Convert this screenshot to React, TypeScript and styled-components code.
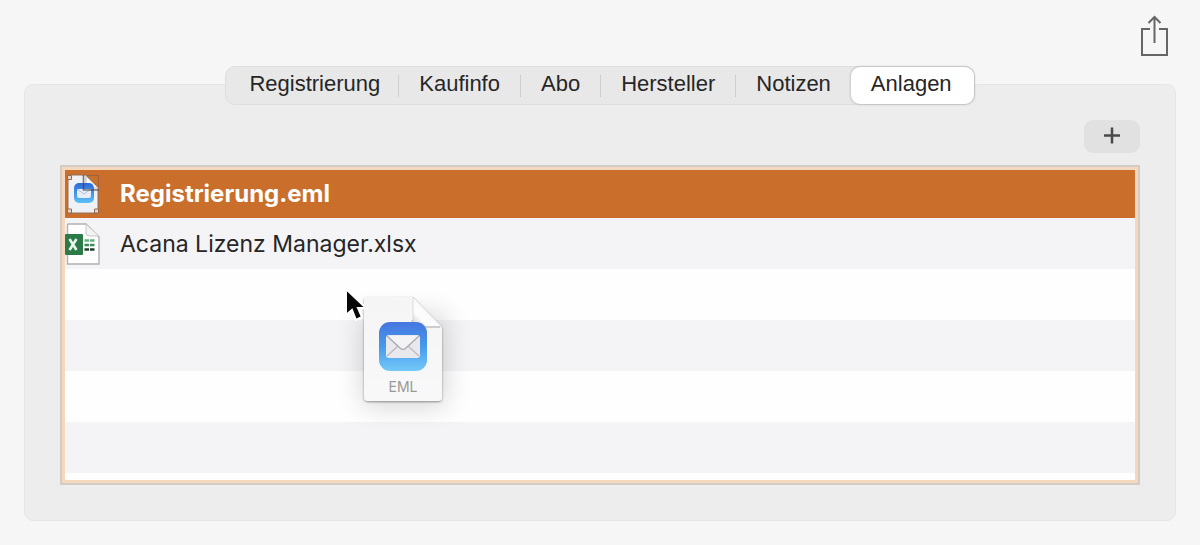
import React, { useState } from "react";
import styled, { createGlobalStyle } from "styled-components";

const GlobalStyle = createGlobalStyle`
  * { box-sizing: border-box; }
  body {
    margin: 0;
    background: #f6f6f6;
    color: #262626;
    font-family: "Liberation Sans", Arial, sans-serif;
  }
`;

const Page = styled.main`
  padding: 14px 24px 24px;
`;

const Toolbar = styled.header`
  display: flex;
  justify-content: flex-end;
  height: 52px;
  padding-right: 6px;
`;

const IconButton = styled.button`
  width: 32px;
  height: 44px;
  padding: 0;
  border: 0;
  background: none;
  svg { display: block; }
`;

const TabBar = styled.nav`
  display: flex;
  align-items: center;
  width: fit-content;
  height: 39px;
  margin: 0 auto -21px;
  position: relative;
  border: 1px solid #dedede;
  border-radius: 10px;
  background: #e8e8e8;
`;

const Tab = styled.button<{ $active: boolean }>`
  height: 37px;
  padding: 0 20px 4px;
  border: 0;
  border-radius: 9px;
  background: ${(p) => (p.$active ? "#ffffff" : "transparent")};
  box-shadow: ${(p) => (p.$active ? "0 0 2px 1px rgba(0, 0, 0, 0.14)" : "none")};
  color: #262626;
  font: 22px/32px "Liberation Sans", Arial, sans-serif;
  &:first-child { padding-left: 23px; padding-right: 18px; }
  &:last-child { padding-right: 22px; }
`;

const Divider = styled.span`
  width: 1px;
  height: 22px;
  background: #cecece;
`;

const Panel = styled.section`
  padding: 35px;
  border: 1px solid #e6e6e6;
  border-radius: 9px;
  background: #ededed;
`;

const Actions = styled.div`
  display: flex;
  justify-content: flex-end;
  margin-bottom: 12px;
`;

const AddButton = styled.button`
  display: grid;
  place-items: center;
  width: 56px;
  height: 33px;
  padding: 0 0 3px;
  border: 0;
  border-radius: 9px;
  background: #e1e1e1;
`;

const DropZone = styled.div`
  position: relative;
  border: 2px solid #d2cbc6;
`;

const FileList = styled.ul`
  margin: 0;
  padding: 0 0 7px;
  border: 3px solid #f5d9bf;
  background: #fffefe;
  list-style: none;
`;

const FileRow = styled.li<{ $selected?: boolean }>`
  display: flex;
  align-items: center;
  gap: 19px;
  height: ${(p) => (p.$selected ? 48 : 51)}px;
  background: ${(p) => (p.$selected ? "#c96f2b" : "transparent")};
  color: ${(p) => (p.$selected ? "#ffffff" : "#262626")};
  font: ${(p) => (p.$selected ? "700 24px" : "400 23px")}/28px Inter, sans-serif;
  &:nth-child(even) { background: #f4f4f6; }
  svg { flex: none; }
`;

const DragPreview = styled.div`
  position: absolute;
  left: 282px;
  top: 122px;
  pointer-events: none;
  svg { display: block; overflow: visible; }
`;

const ShareIcon = () => (
  <svg width="32" height="44" viewBox="0 0 32 44" fill="none" stroke="#666" strokeWidth="2">
    <path d="M12 15H4v26h25V15H21M16.500 29V3M10.500 9l6-6 6 6" />
  </svg>
);

const PlusIcon = () => (
  <svg width="18" height="18" viewBox="0 0 18 18" stroke="#4a4a4a" strokeWidth="2.500">
    <path d="M1 9.500h16M9 1.500v16" />
  </svg>
);

const EmlFileIcon = () => (
  <svg width="36" height="42" viewBox="0 0 36 42">
    <defs>
      <linearGradient id="smallMail" x1="0" y1="0" x2="0" y2="1">
        <stop offset="0" stopColor="#2c68d8" />
        <stop offset="1" stopColor="#5cc0f6" />
      </linearGradient>
    </defs>
    <path d="M3 2h18l12 13v25H3z" fill="#eef1f5" stroke="#94705c" />
    <path d="M21 3v12h12z" fill="#fff" stroke="#c3b6ae" />
    <path d="M22 2.500h11.500V14" fill="none" stroke="#a0623a" />
    <rect x="9" y="10" width="20" height="20" rx="5" fill="url(#smallMail)" />
    <rect x="12" y="16" width="14" height="9" rx="2" fill="#e6edf7" />
    <path d="m12 16 7 5 7-5" fill="none" stroke="#b5c0d1" />
    <path d="M18.500 2v15H34" fill="none" stroke="#4b4149" strokeOpacity=".7" strokeWidth="1.600" />
    <path d="M2.500 2.500h4v4h-4zM2.500 36h4v4h-4zM29.500 36h4v4h-4z" fill="#e6d3c6" stroke="#936a51" />
  </svg>
);

const XlsxFileIcon = () => (
  <svg width="36" height="44" viewBox="0 0 36 44">
    <path d="M3.500 2H21l13 13v27H2.500V3q0-1 1-1z" fill="#fff" stroke="#b0b1b3" strokeWidth="1.400" />
    <path d="M21 2v9q0 3 4 3h9z" fill="#f3f3f3" stroke="#c6c6c6" />
    <rect x="0" y="12" width="18" height="21" rx="1" fill="#2b7a47" />
    <path d="m4.500 17 7 11M11.500 17l-7 11" stroke="#e9f6ed" strokeWidth="2.600" />
    <path d="M19.500 18.500h4.500M25 18.500h4.500" stroke="#62b07e" strokeWidth="2.600" />
    <path d="M19.500 23h4.500M25 23h4.500" stroke="#418a5a" strokeWidth="2.600" />
    <path d="M19.500 27.500h4.500M25 27.500h4.500" stroke="#203e2c" strokeWidth="2.600" />
  </svg>
);

const DraggedFile = () => (
  <svg width="104" height="120" viewBox="0 0 104 120">
    <defs>
      <linearGradient id="mail" x1="0" y1="0" x2="0" y2="1">
        <stop offset="0" stopColor="#4576df" />
        <stop offset=".5" stopColor="#4799eb" />
        <stop offset="1" stopColor="#74c9f9" />
      </linearGradient>
      <linearGradient id="fold" x1="0" y1="1" x2=".7" y2=".3">
        <stop offset="0" stopColor="#c9c9c9" />
        <stop offset=".4" stopColor="#fdfdfd" />
        <stop offset="1" stopColor="#f8f8f8" />
      </linearGradient>
      <linearGradient id="paper" x1="0" y1="0" x2="0" y2="1">
        <stop offset="0" stopColor="#f5f5f6" />
        <stop offset="1" stopColor="#f8f8f8" />
      </linearGradient>
      <filter id="shadow" x="-50%" y="-50%" width="200%" height="200%">
        <feGaussianBlur stdDeviation="14" />
      </filter>
      <filter id="edge" x="-10%" y="-10%" width="120%" height="120%">
        <feDropShadow dx="0" dy="1" stdDeviation="1" floodColor="#000" floodOpacity=".4" />
      </filter>
    </defs>
    <rect x="20" y="26" width="80" height="90" fill="#000" opacity=".18" filter="url(#shadow)" />
    <path d="M23 8h46l29 30v70q0 4-4 4H24q-4 0-4-4V11q0-3 3-3z" fill="url(#paper)" filter="url(#edge)" />
    <path d="M69 8v25q0 5 5 5h24z" fill="url(#fold)" stroke="#d0d0d0" strokeWidth=".7" />
    <path d="M68 31q1 7 8 7h20" fill="none" stroke="#c4c4c4" strokeWidth="1.500" />
    <rect x="35" y="33" width="48" height="49" rx="11" fill="url(#mail)" />
    <rect x="42" y="46" width="34" height="23" rx="3" fill="#e9e9ed" />
    <path d="m43 67 11-10M75 67 64 57" stroke="#bdbdc3" strokeWidth="1.400" fill="none" />
    <path d="m43 47 13 12q3 3 6 0l13-12" stroke="#adadb4" strokeWidth="1.500" fill="#f3f3f5" />
    <text x="59" y="103" textAnchor="middle" fill="#999" fontFamily="Inter, sans-serif" fontSize="14">EML</text>
    <path d="M2 0v26l6-5 4 10 6-3-4-9h8z" fill="#080808" stroke="#fff" strokeWidth="2" />
  </svg>
);

const tabs = ["Registrierung", "Kaufinfo", "Abo", "Hersteller", "Notizen", "Anlagen"];

export default function App() {
  const [active, setActive] = useState("Anlagen");
  return (
    <>
      <GlobalStyle />
      <Page>
        <Toolbar>
          <IconButton aria-label="Teilen"><ShareIcon /></IconButton>
        </Toolbar>
        <TabBar>
          {tabs.map((name, i) => (
            <React.Fragment key={name}>
              {i > 0 && name !== active && tabs[i - 1] !== active && <Divider />}
              <Tab $active={name === active} onClick={() => setActive(name)}>{name}</Tab>
            </React.Fragment>
          ))}
        </TabBar>
        <Panel>
          <Actions>
            <AddButton aria-label="Anlage hinzufügen"><PlusIcon /></AddButton>
          </Actions>
          <DropZone>
            <FileList>
              <FileRow $selected><EmlFileIcon />Registrierung.eml</FileRow>
              <FileRow><XlsxFileIcon />Acana Lizenz Manager.xlsx</FileRow>
              <FileRow />
              <FileRow />
              <FileRow />
              <FileRow />
            </FileList>
            <DragPreview><DraggedFile /></DragPreview>
          </DropZone>
        </Panel>
      </Page>
    </>
  );
}
